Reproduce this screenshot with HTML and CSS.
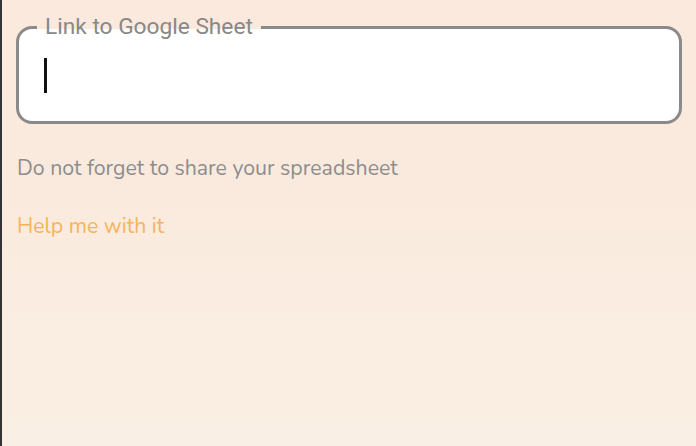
FILE: index.html
```html
<!DOCTYPE html>
<html lang="en">
<head>
<meta charset="utf-8">
<title>Link to Google Sheet</title>
<link rel="stylesheet" href="styles.css">
</head>
<body>
<main class="page">
  <fieldset class="field">
    <legend class="field-label">Link to Google Sheet</legend>
    <div class="field-input"><span class="caret"></span></div>
  </fieldset>
  <p class="hint">Do not forget to share your spreadsheet</p>
  <a class="help" href="#">Help me with it</a>
</main>
</body>
</html>
```
FILE: styles.css
```css
html, body {
  margin: 0;
  height: 100%;
}
body {
  background: linear-gradient(180deg, #fae9dc 0%, #faeadd 40%, #faefe4 100%);
  border-left: 2px solid #333333;
  box-sizing: border-box;
}
.page {
  padding: 14px 14px 0 14px;
  display: flex;
  flex-direction: column;
  align-items: flex-start;
}
.field {
  align-self: stretch;
  margin: 0;
  min-width: 0;
  padding: 0 0 0 25px;
  border: 3px solid #8a8a8a;
  border-radius: 16px;
  background: #ffffff;
  background-clip: padding-box;
}
.field-label {
  margin-left: -7px;
  padding: 0 8px;
  font-family: Roboto, "Liberation Sans", sans-serif;
  font-size: 22.7px;
  line-height: 26px;
  color: #888888;
  background: transparent;
}
.field-input {
  height: 81px;
  display: flex;
  align-items: flex-start;
}
.caret {
  display: block;
  width: 3px;
  height: 35px;
  margin-top: 18px;
  background: #111111;
}
.hint {
  margin: 32px 0 0 1px;
  font-family: Nunito, Lato, "Open Sans", sans-serif;
  font-size: 21.3px;
  line-height: 24px;
  color: #8d8d8d;
}
.help {
  margin: 34px 0 0 1px;
  font-family: Nunito, Lato, "Open Sans", sans-serif;
  font-size: 21.3px;
  line-height: 24px;
  color: #f6b45a;
  text-decoration: none;
}
```
